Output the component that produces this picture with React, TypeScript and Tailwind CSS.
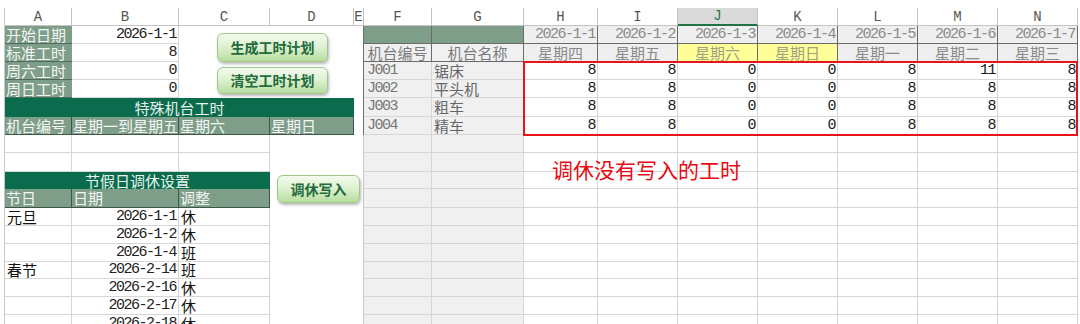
import React from 'react';

type Cell = { c: string; t?: string };

// text styles
const CN = "font-['Noto_Sans_CJK_SC',sans-serif] text-[15px]";
const NUM = "font-['Liberation_Mono',monospace] text-[15px] tracking-[-1.5px] justify-end pr-[2px]";
const NUML = "font-['Liberation_Mono',monospace] text-[15px] tracking-[-1.5px] pl-[3px]";

// cell styles
const RH = 'bg-white border-r border-[#c8c8c8]';
const WHITE = 'bg-white';
const GRID = 'bg-white border-r border-b border-[#d6d6d6]';
const GRAY = 'bg-[#f0f0f0] border-r border-b border-[#d6d6d6]';
const EDGE_DARK = 'bg-white border-r border-[#6f6f6f]';
const EDGE = 'bg-white border-r border-[#c8c8c8]';
const LABEL = `bg-[#7f9e8a] text-[#f4f7f4] border-b border-[#4e6b59] pl-[1px] ${CN}`;
const LABEL_V = `bg-[#7f9e8a] text-[#f4f7f4] border-r border-b border-[#3d5646] pl-[1px] ${CN}`;
const TITLE = `bg-[#0a6c4c] text-[#e9f2ec] justify-center ${CN}`;
const VALB = `${GRID} text-[#222] ${NUM}`;
const TXT = `${GRID} text-[#111] pl-[2px] ${CN}`;

const HEAD = "bg-white border-r border-b border-[#c4c4c4] justify-center text-[#555] font-['Liberation_Mono',monospace] text-[14px]";
const HEAD_SEL = "bg-[#dadada] border-r border-r-[#c4c4c4] border-b-2 border-b-[#217346] justify-center text-[#217346] font-['Liberation_Mono',monospace] text-[14px]";

const TOPF = 'bg-[#7f9e8a] border-r border-b border-[#6a6a6a]';
const DATE = `bg-[#efefef] text-[#8a8a8a] border-r border-b border-[#6a6a6a] ${NUM}`;
const WK = `bg-[#efefef] text-[#8a8a8a] border-r border-b border-[#6a6a6a] justify-center ${CN}`;
const WKY = `bg-[#ffff99] text-[#a0a080] border-r border-b border-[#6a6a6a] justify-center ${CN}`;
const HDRF = `bg-[#f0f0f0] text-[#7a7a7a] border-r border-b border-[#6a6a6a] justify-center ${CN}`;
const ID = `${GRAY} text-[#777] ${NUML}`;
const NAME = `${GRAY} text-[#666] pl-[2px] ${CN}`;
const VAL = `${GRID} text-[#1a1a1a] ${NUM}`;

const letters = ['A', 'B', 'C', 'D', 'E', 'F', 'G', 'H', 'I', 'J', 'K', 'L', 'M', 'N'];
const dates = ['2026-1-1', '2026-1-2', '2026-1-3', '2026-1-4', '2026-1-5', '2026-1-6', '2026-1-7'];
const weekdays = ['星期四', '星期五', '星期六', '星期日', '星期一', '星期二', '星期三'];

const machines = [
  { id: 'J001', name: '锯床', hours: [8, 8, 0, 0, 8, 11, 8] },
  { id: 'J002', name: '平头机', hours: [8, 8, 0, 0, 8, 8, 8] },
  { id: 'J003', name: '粗车', hours: [8, 8, 0, 0, 8, 8, 8] },
  { id: 'J004', name: '精车', hours: [8, 8, 0, 0, 8, 8, 8] },
];

const holidays: [string, string, string][] = [
  ['元旦', '2026-1-1', '休'],
  ['', '2026-1-2', '休'],
  ['', '2026-1-4', '班'],
  ['春节', '2026-2-14', '班'],
  ['', '2026-2-16', '休'],
  ['', '2026-2-17', '休'],
  ['', '2026-2-18', '休'],
];

// columns A..E for each sheet row (1..17)
const left: Cell[][] = [
  [{ c: LABEL, t: '开始日期' }, { c: VALB, t: '2026-1-1' }, { c: WHITE }, { c: WHITE }, { c: EDGE_DARK }],
  [{ c: LABEL, t: '标准工时' }, { c: VALB, t: '8' }, { c: WHITE }, { c: WHITE }, { c: EDGE_DARK }],
  [{ c: LABEL, t: '周六工时' }, { c: VALB, t: '0' }, { c: WHITE }, { c: WHITE }, { c: EDGE_DARK }],
  [{ c: LABEL, t: '周日工时' }, { c: VALB, t: '0' }, { c: WHITE }, { c: WHITE }, { c: EDGE_DARK }],
  [{ c: `col-span-4 ${TITLE}`, t: '特殊机台工时' }, { c: EDGE_DARK }],
  [
    { c: LABEL_V, t: '机台编号' },
    { c: LABEL_V, t: '星期一到星期五' },
    { c: LABEL_V, t: '星期六' },
    { c: LABEL_V, t: '星期日' },
    { c: EDGE_DARK },
  ],
  [{ c: GRID }, { c: GRID }, { c: GRID }, { c: WHITE }, { c: EDGE }],
  [{ c: GRID }, { c: GRID }, { c: GRID }, { c: WHITE }, { c: EDGE }],
  [{ c: `col-span-3 ${TITLE}`, t: '节假日调休设置' }, { c: WHITE }, { c: EDGE }],
  [{ c: LABEL_V, t: '节日' }, { c: LABEL_V, t: '日期' }, { c: LABEL_V, t: '调整' }, { c: WHITE }, { c: EDGE }],
  ...holidays.map(([a, b, c]) => [{ c: TXT, t: a }, { c: VALB, t: b }, { c: TXT, t: c }, { c: WHITE }, { c: EDGE }]),
];

// columns F..N for each sheet row
const right = (r: number): Cell[] => {
  if (r === 1) return [{ c: TOPF }, { c: TOPF }, ...dates.map((d) => ({ c: DATE, t: d }))];
  if (r === 2)
    return [
      { c: HDRF, t: '机台编号' },
      { c: HDRF, t: '机台名称' },
      ...weekdays.map((w, i) => ({ c: i === 2 || i === 3 ? WKY : WK, t: w })),
    ];
  const m = machines[r - 3];
  if (m) return [{ c: ID, t: m.id }, { c: NAME, t: m.name }, ...m.hours.map((h) => ({ c: VAL, t: String(h) }))];
  return [{ c: GRAY }, { c: GRAY }, ...dates.map(() => ({ c: GRID }))];
};

const header: Cell[] = [{ c: RH }, ...letters.map((l) => ({ c: l === 'J' ? HEAD_SEL : HEAD, t: l })), { c: WHITE }];

const rows: Cell[][] = left.map((l, i) => [{ c: RH }, ...l, ...right(i + 1), { c: WHITE }]);

const Btn = ({ className, children }: { className: string; children: React.ReactNode }) => (
  <div
    className={`absolute flex items-center justify-center rounded-[6px] border border-[#9cc888] bg-linear-to-b from-[#f4fbef] via-[#dcf0cf] to-[#b8dd9f] shadow-[1px_2px_3px_rgba(0,0,0,0.28)] text-[14px] font-bold text-[#236a3c] font-['Noto_Sans_CJK_SC',sans-serif] ${className}`}
  >
    {children}
  </div>
);

export default function App() {
  return (
    <div className="relative h-[324px] w-[1080px] overflow-hidden bg-white">
      <div className="grid grid-cols-[5px_67px_107px_91px_84px_10px_68px_92px_74px_80px_80px_80px_80px_80px_80px_2px] grid-rows-[8px_18px_18px_18px_18px_18px_19px_18px_18px_19px_17px_19px_18px_18px_18px_17px_18px_18px_18px]">
        <div className="col-span-full bg-white" />
        {[header, ...rows].map((row, ri) =>
          row.map((cell, ci) => (
            <div
              key={`${ri}-${ci}`}
              className={`flex items-center overflow-hidden whitespace-nowrap leading-[18px] ${cell.c}`}
            >
              {cell.t}
            </div>
          ))
        )}
      </div>

      {/* buttons sitting on the sheet */}
      <Btn className="left-[217px] top-[33px] h-[29px] w-[111px]">生成工时计划</Btn>
      <Btn className="left-[217px] top-[67px] h-[27px] w-[111px]">清空工时计划</Btn>
      <Btn className="left-[277px] top-[175px] h-[28px] w-[83px]">调休写入</Btn>

      {/* red highlight box + note */}
      <div className="absolute left-[523px] top-[61px] h-[75px] w-[555px] border-2 border-[#e8131b]" />
      <div className="absolute left-[552px] top-[156px] text-[21px] leading-[26px] text-[#e60b14] font-['Noto_Sans_CJK_SC',sans-serif]">
        调休没有写入的工时
      </div>
    </div>
  );
}
